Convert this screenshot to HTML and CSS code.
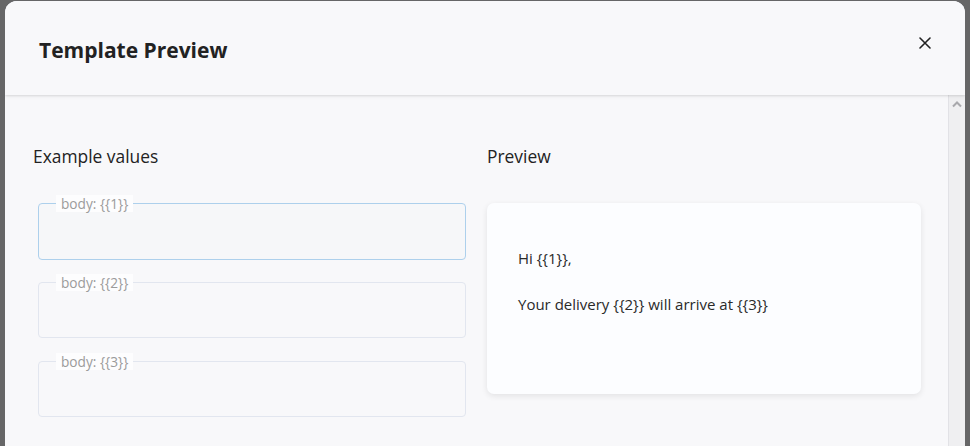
FILE: index.html
```html
<!DOCTYPE html>
<html>
<head>
<meta charset="utf-8">
<link rel="stylesheet" href="styles.css">
</head>
<body>
<div class="modal">
  <header class="modal-header">
    <h1 class="modal-title">Template Preview</h1>
    <button class="close-btn" aria-label="Close">
      <svg width="12" height="12" viewBox="0 0 12 12"><path d="M1 1L11 11M11 1L1 11" stroke="#222" stroke-width="1.6" stroke-linecap="round"/></svg>
    </button>
  </header>
  <div class="modal-body">
    <div class="content">
      <section class="col col-left">
        <h2 class="col-title">Example values</h2>
        <div class="fields">
          <div class="field field-focus">
            <span class="field-label">body: {{1}}</span>
          </div>
          <div class="field">
            <span class="field-label">body: {{2}}</span>
          </div>
          <div class="field">
            <span class="field-label">body: {{3}}</span>
          </div>
        </div>
      </section>
      <section class="col col-right">
        <h2 class="col-title">Preview</h2>
        <div class="preview-card">
          <p class="preview-line">Hi {{1}},</p>
          <p class="preview-line">Your delivery {{2}} will arrive at {{3}}</p>
        </div>
      </section>
    </div>
    <div class="scrollbar">
      <svg width="10" height="8" viewBox="0 0 10 8"><path d="M1 6.5L5 2.5L9 6.5" stroke="#a8a8ac" stroke-width="2" fill="none"/></svg>
    </div>
  </div>
</div>
</body>
</html>
```
FILE: styles.css
```css
html, body {
  margin: 0;
  padding: 0;
  height: 100%;
  overflow: hidden;
}
body {
  background: #666667;
  font-family: "Open Sans", "Noto Sans", sans-serif;
  color: #222;
}
.modal {
  margin: 1px 0 0 5px;
  width: 960px;
  height: 460px;
  background: #f8f8fa;
  border-radius: 12px 12px 0 0;
  display: flex;
  flex-direction: column;
  overflow: hidden;
  box-shadow: inset 0 1px 0 #e4e9f2;
}
.modal-header {
  height: 94px;
  flex: none;
  display: flex;
  align-items: center;
  justify-content: space-between;
  padding: 0 34px 0 34px;
  box-sizing: border-box;
  background: #f8f8fa;
  box-shadow: 0 1px 2px rgba(0,0,0,0.10), 0 2px 4px rgba(0,0,0,0.04);
  position: relative;
  z-index: 1;
}
.modal-title {
  margin: 4px 0 0;
  font-size: 21px;
  font-weight: 700;
  color: #222;
  line-height: 26px;
}
.close-btn {
  border: 0;
  background: none;
  padding: 0;
  width: 12px;
  height: 12px;
  margin-top: -10px;
  display: flex;
}
.modal-body {
  flex: 1;
  display: flex;
}
.content {
  flex: 1;
  display: grid;
  grid-template-columns: 438px 434px;
  column-gap: 16px;
  padding: 51px 0 0 28px;
  align-items: start;
}
.col-title {
  margin: 0;
  font-size: 17.4px;
  font-weight: 400;
  color: #222;
  line-height: 20px;
}
.fields {
  display: flex;
  flex-direction: column;
  gap: 22px;
  margin-top: 37px;
  padding: 0 5px;
}
.field {
  position: relative;
  height: 56px;
  border: 1px solid #e2e6ef;
  border-radius: 4px;
  box-sizing: border-box;
}
.field + .field + .field {
  margin-top: 1px;
}
.field-focus {
  height: 57px;
  border-color: #add0ec;
  background: #f6f7f9;
}
.field-label {
  position: absolute;
  left: 17px;
  top: -9px;
  padding: 0 5px;
  background: #fdfdfe;
  font-size: 13.7px;
  line-height: 17px;
  color: #9b9b9b;
}
.preview-card {
  margin-top: 37px;
  height: 191px;
  background: #fcfdff;
  border-radius: 7px;
  box-shadow: 0 2px 6px rgba(0,0,0,0.09);
  padding: 46px 31px 0;
  box-sizing: border-box;
}
.preview-line {
  margin: 0 0 28px;
  font-size: 15px;
  line-height: 18px;
  color: #2a2a2a;
}
.scrollbar {
  width: 16px;
  flex: none;
  background: #efeff1;
  border-left: 1px solid #e2e2e6;
  display: flex;
  justify-content: center;
  padding-top: 5px;
  box-sizing: content-box;
}
.scrollbar svg {
  display: block;
}
```
